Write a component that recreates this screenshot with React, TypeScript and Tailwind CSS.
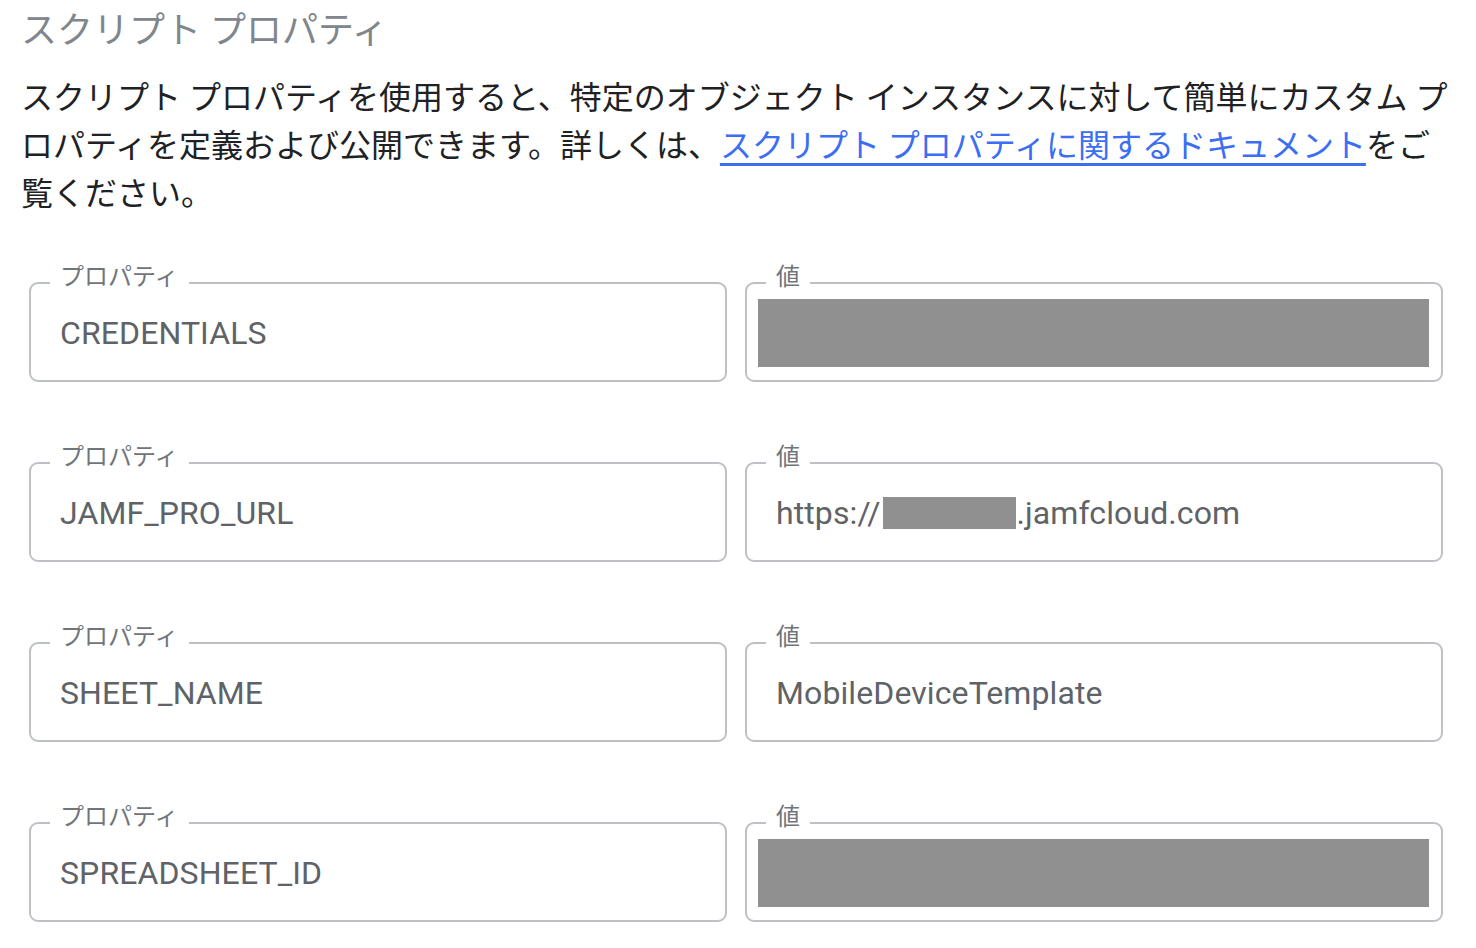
import React from 'react';

type Row = {
  property: string;
  value: React.ReactNode;
};

const Redacted = ({ className }: { className: string }) => (
  <span className={`inline-block bg-[#909090] ${className}`} />
);

const rows: Row[] = [
  { property: 'CREDENTIALS', value: <Redacted className="w-[671px] h-[68px] -ml-[18px] mt-[-1px]" /> },
  {
    property: 'JAMF_PRO_URL',
    value: (
      <span className="flex items-center">
        https://
        <Redacted className="w-[133px] h-[32px] ml-[2px] mr-[1px]" />
        .jamfcloud.com
      </span>
    ),
  },
  { property: 'SHEET_NAME', value: 'MobileDeviceTemplate' },
  { property: 'SPREADSHEET_ID', value: <Redacted className="w-[671px] h-[68px] -ml-[18px] mt-[-1px]" /> },
];

function OutlinedField({ label, children }: { label: string; children: React.ReactNode }) {
  return (
    <div className="relative h-[100px] border-2 border-[#bdc1c6] rounded-[9px] flex items-center pl-[29px] pt-[2px]">
      <span className="absolute left-[19px] top-[-21px] px-[10px] bg-white text-[24px] leading-[24px] text-[#70757a] font-['Noto_Sans_CJK_JP',sans-serif]">
        {label}
      </span>
      <div className="text-[32px] leading-[48px] text-[#5f6368] tracking-[0.1px] font-['Roboto','Noto_Sans_CJK_JP',sans-serif] whitespace-nowrap flex items-center">
        {children}
      </div>
    </div>
  );
}

export default function App() {
  return (
    <div className="bg-white min-h-[948px] w-[1476px] px-[21px] pt-[3px] font-['Roboto','Noto_Sans_CJK_JP',sans-serif]">
      <h1 className="text-[36px] leading-[56px] font-normal text-[#80868b]">スクリプト プロパティ</h1>

      <p className="mt-[15px] text-[32px] leading-[48px] text-[#202124]">
        スクリプト プロパティを使用すると、特定のオブジェクト インスタンスに対して簡単にカスタム プロパティを定義および公開できます。詳しくは、
        <a href="#" className="text-[#3b6ef2] underline decoration-[3px] underline-offset-[6px]">
          スクリプト プロパティに関するドキュメント
        </a>
        をご覧ください。
      </p>

      <div className="ml-[8px] mt-[64px] flex flex-col gap-[80px]">
        {rows.map((row) => (
          <div key={row.property} className="grid grid-cols-[698px_698px] gap-[18px]">
            <OutlinedField label="プロパティ">{row.property}</OutlinedField>
            <OutlinedField label="値">{row.value}</OutlinedField>
          </div>
        ))}
      </div>
    </div>
  );
}
